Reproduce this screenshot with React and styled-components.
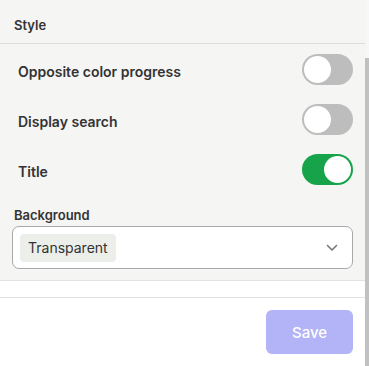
import React from "react";
import styled, { createGlobalStyle } from "styled-components";

const Global = createGlobalStyle`
  html, body { margin: 0; padding: 0; background: #ffffff; }
  body { font-family: Inter, "Noto Sans", sans-serif; color: #2f2f2f; }
`;

const Frame = styled.div`
  display: flex;
  width: 369px;
  height: 366px;
  overflow: hidden;
`;

const Main = styled.div`
  flex: 1;
  display: flex;
  flex-direction: column;
  min-width: 0;
`;

const ScrollTrack = styled.div`
  width: 4px;
  display: flex;
  flex-direction: column;
  background: #f7f7f7;
`;

const ScrollThumb = styled.div`
  margin-top: 58px;
  flex: 1;
  background: #c1c1c1;
`;

const Panel = styled.section`
  background: #f5f5f3;
  border-bottom: 1px solid #e2e2e2;
`;

const Header = styled.div`
  height: 44px;
  display: flex;
  align-items: center;
  padding: 7px 0 0 14px;
  font-size: 13px;
  font-weight: 600;
  color: #333;
  border-bottom: 1px solid #dddde0;
  box-sizing: border-box;
`;

const Row = styled.div`
  height: 50px;
  box-sizing: border-box;
  display: flex;
  align-items: center;
  justify-content: space-between;
  padding: 0 12px 0 18px;
`;

const Label = styled.span`
  font-size: 14px;
  font-weight: 600;
  color: #333;
  padding-top: 4px;
`;

const Track = styled.div`
  position: relative;
  width: 51px;
  height: 31px;
  border-radius: 16px;
  background: ${(p) => (p.$on ? "#17a34a" : "#bdbdbd")};
`;

const Knob = styled.div`
  position: absolute;
  top: 2px;
  left: ${(p) => (p.$on ? "22px" : "2px")};
  width: 27px;
  height: 27px;
  border-radius: 50%;
  background: #fff;
`;

const Field = styled.div`
  padding: 12px 12px 11px 12px;
  display: flex;
  flex-direction: column;
`;

const FieldLabel = styled.div`
  font-size: 13px;
  font-weight: 600;
  color: #333;
  margin: 1px 0 3px 2px;
  line-height: 16px;
`;

const Select = styled.div`
  height: 43px;
  box-sizing: border-box;
  border: 1px solid #a9a9a9;
  border-radius: 7px;
  background: #fff;
  display: flex;
  align-items: center;
  justify-content: space-between;
  padding: 0 14px 0 7px;
`;

const Chip = styled.span`
  background: #eceeea;
  border-radius: 4px;
  height: 28px;
  display: flex;
  align-items: center;
  padding: 0 8px;
  font-size: 14px;
  color: #333;
`;

const Spacer = styled.div`
  height: 16px;
  border-bottom: 1px solid #e2e2e2;
`;

const Footer = styled.div`
  display: flex;
  justify-content: flex-end;
  padding: 12px 12px 0 0;
`;

const SaveButton = styled.button`
  width: 87px;
  height: 44px;
  border: none;
  border-radius: 6px;
  background: #b3b3f8;
  color: #fff;
  font-family: Inter, sans-serif;
  font-size: 15px;
  font-weight: 500;
`;

function Toggle({ on }) {
  return (
    <Track $on={on}>
      <Knob $on={on} />
    </Track>
  );
}

export default function App() {
  return (
    <>
      <Global />
      <Frame>
        <Main>
          <Panel>
            <Header>Style</Header>
            <Row>
              <Label>Opposite color progress</Label>
              <Toggle on={false} />
            </Row>
            <Row>
              <Label>Display search</Label>
              <Toggle on={false} />
            </Row>
            <Row>
              <Label>Title</Label>
              <Toggle on={true} />
            </Row>
            <Field>
              <FieldLabel>Background</FieldLabel>
              <Select>
                <Chip>Transparent</Chip>
                <svg width="12" height="8" viewBox="0 0 12 8" fill="none">
                  <path d="M1.5 1.5 L6 6 L10.5 1.5" stroke="#777" strokeWidth="1.6" strokeLinecap="round" strokeLinejoin="round" />
                </svg>
              </Select>
            </Field>
          </Panel>
          <Spacer />
          <Footer>
            <SaveButton>Save</SaveButton>
          </Footer>
        </Main>
        <ScrollTrack>
          <ScrollThumb />
        </ScrollTrack>
      </Frame>
    </>
  );
}
